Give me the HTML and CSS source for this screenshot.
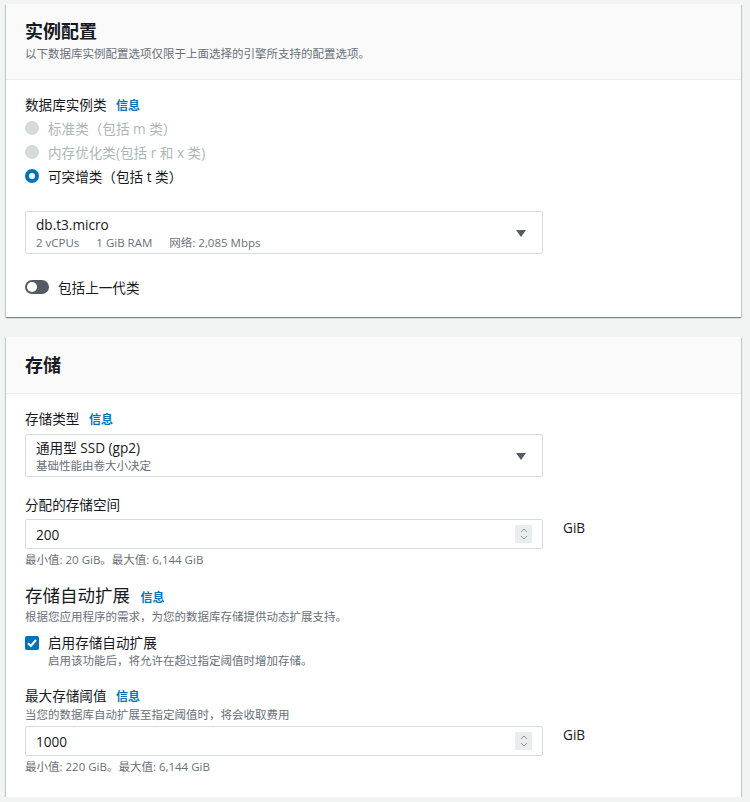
FILE: index.html
```html
<!DOCTYPE html>
<html lang="zh-CN">
<head>
    <meta charset="UTF-8">
    <meta name="viewport" content="width=device-width, initial-scale=1.0">
    <link rel="stylesheet" href="styles.css">
</head>
<body>
    <div class="page">
        <!-- 实例配置 -->
        <section class="card">
            <div class="card-header">
                <h2 class="card-title">实例配置</h2>
                <p class="card-desc">以下数据库实例配置选项仅限于上面选择的引擎所支持的配置选项。</p>
            </div>
            <div class="card-body">
                <div class="field-label">数据库实例类 <a class="info">信息</a></div>
                <div class="radio-group">
                    <div class="radio-row disabled"><span class="radio"></span>标准类（包括 m 类）</div>
                    <div class="radio-row disabled"><span class="radio"></span>内存优化类(包括 r 和 x 类)</div>
                    <div class="radio-row"><span class="radio checked"></span>可突增类（包括 t 类）</div>
                </div>
                <div class="select select-instance">
                    <div class="select-text">
                        <div class="select-main">db.t3.micro</div>
                        <div class="select-sub"><span>2 vCPUs</span><span>1 GiB RAM</span><span>网络: 2,085 Mbps</span></div>
                    </div>
                    <span class="caret"></span>
                </div>
                <div class="toggle-row">
                    <span class="toggle"><span class="knob"></span></span>
                    包括上一代类
                </div>
            </div>
        </section>

        <!-- 存储 -->
        <section class="card">
            <div class="card-header storage-header">
                <h2 class="card-title">存储</h2>
            </div>
            <div class="card-body storage-body">
                <div class="field-label">存储类型 <a class="info">信息</a></div>
                <div class="select select-storage">
                    <div class="select-text">
                        <div class="select-main">通用型 SSD (gp2)</div>
                        <div class="select-sub">基础性能由卷大小决定</div>
                    </div>
                    <span class="caret"></span>
                </div>

                <div class="field-label gap-top">分配的存储空间</div>
                <div class="input-row">
                    <div class="input">
                        <span>200</span>
                        <span class="spinner">
                            <svg width="10" height="14" viewBox="0 0 10 14"><path d="M2 5 L5 2 L8 5 M2 9 L5 12 L8 9" fill="none" stroke="#879596" stroke-width="1"/></svg>
                        </span>
                    </div>
                    <span class="unit">GiB</span>
                </div>
                <div class="hint">最小值: 20 GiB。最大值: 6,144 GiB</div>

                <div class="sub-heading">存储自动扩展 <a class="info">信息</a></div>
                <div class="desc">根据您应用程序的需求，为您的数据库存储提供动态扩展支持。</div>
                <div class="check-row">
                    <span class="checkbox">
                        <svg width="14" height="14" viewBox="0 0 14 14"><path d="M3 7.2 L5.8 10 L11 4" fill="none" stroke="#fff" stroke-width="2"/></svg>
                    </span>
                    <div>
                        <div class="check-label">启用存储自动扩展</div>
                        <div class="desc">启用该功能后，将允许在超过指定阈值时增加存储。</div>
                    </div>
                </div>

                <div class="field-label threshold-label">最大存储阈值 <a class="info">信息</a></div>
                <div class="desc">当您的数据库自动扩展至指定阈值时，将会收取费用</div>
                <div class="input-row">
                    <div class="input">
                        <span>1000</span>
                        <span class="spinner">
                            <svg width="10" height="14" viewBox="0 0 10 14"><path d="M2 5 L5 2 L8 5 M2 9 L5 12 L8 9" fill="none" stroke="#879596" stroke-width="1"/></svg>
                        </span>
                    </div>
                    <span class="unit">GiB</span>
                </div>
                <div class="hint">最小值: 220 GiB。最大值: 6,144 GiB</div>
            </div>
        </section>
    </div>
</body>
</html>
```

FILE: styles.css
```css
/* page */
body {
    margin: 0;
    background-color: #f2f3f3;
    font-family: "Open Sans", "Noto Sans CJK SC", sans-serif;
    color: #16191f;
    font-size: 13.6px;
}

.page {
    padding: 4px 9px 0 6px;
    display: flex;
    flex-direction: column;
    gap: 20px;
}

/* cards */
.card {
    background: #fff;
    box-shadow: 0 1px 1px 0 rgba(0, 28, 36, 0.3), 1px 1px 1px 0 rgba(0, 28, 36, 0.15), -1px 1px 1px 0 rgba(0, 28, 36, 0.15);
}

.card-header {
    background: #fafafa;
    border-bottom: 1px solid #eaeded;
    padding: 16px 19px 17px;
}

.storage-header {
    padding-top: 17px;
}

.card-title {
    margin: 0;
    font-size: 18px;
    line-height: 22px;
    font-weight: bold;
}

.card-desc {
    margin: 4px 0 0;
    font-size: 11.5px;
    line-height: 16px;
    color: #687078;
}

.card-body {
    padding: 14px 19px 20px;
}

.storage-body {
    padding-bottom: 22px;
}

.field-label {
    line-height: 22px;
}

.info {
    color: #0073bb;
    font-size: 12px;
    font-weight: bold;
    margin-left: 6px;
}

.gap-top {
    margin-top: 17px;
}

.threshold-label {
    margin-top: 17px;
    line-height: 20px;
}

/* radios */
.radio-group {
    margin-top: -1px;
}

.radio-row {
    display: flex;
    align-items: center;
    height: 24px;
}

.radio-row.disabled {
    color: #aab7b8;
}

.radio {
    width: 14px;
    height: 14px;
    border-radius: 50%;
    background: #d5dbdb;
    margin-right: 9px;
    box-sizing: border-box;
}

.radio.checked {
    background: #fff;
    border: 4px solid #0073bb;
}

/* selects */
.select {
    width: 518px;
    box-sizing: border-box;
    border: 1px solid #d5dbdb;
    border-radius: 2px;
    display: flex;
    align-items: center;
    padding: 3px 16px 2px 10px;
}

.select-instance {
    margin-top: 23px;
}

.select-storage {
    margin-top: 3px;
}

.select-text {
    flex: 1;
}

.select-main {
    line-height: 20px;
}

.select-sub {
    font-size: 11.5px;
    line-height: 16px;
    color: #687078;
}

.select-sub span {
    margin-right: 17px;
}

.caret {
    width: 0;
    height: 0;
    border-left: 5px solid transparent;
    border-right: 5px solid transparent;
    border-top: 7px solid #545b64;
}

/* toggle */
.toggle-row {
    display: flex;
    align-items: center;
    height: 20px;
    margin-top: 23px;
}

.toggle {
    width: 24px;
    height: 14px;
    border-radius: 7px;
    background: #545b64;
    margin-right: 9px;
    display: flex;
    align-items: center;
    padding-left: 2px;
    box-sizing: border-box;
}

.knob {
    width: 10px;
    height: 10px;
    border-radius: 50%;
    background: #fff;
}

/* number inputs */
.input-row {
    display: flex;
    align-items: flex-start;
    margin-top: 3px;
}

.input {
    width: 518px;
    height: 30px;
    box-sizing: border-box;
    border: 1px solid #d5dbdb;
    border-radius: 2px;
    display: flex;
    align-items: center;
    justify-content: space-between;
    padding: 0 10px 0 10px;
}

.spinner {
    width: 17px;
    height: 18px;
    background: #eaeded;
    display: flex;
    align-items: center;
    justify-content: center;
}

.unit {
    margin-left: 20px;
    line-height: 20px;
    margin-top: -1px;
}

.hint {
    font-size: 11.5px;
    line-height: 16px;
    color: #687078;
    margin-top: 3px;
}

.desc {
    font-size: 11.5px;
    line-height: 16px;
    color: #687078;
}

.sub-heading {
    font-size: 17.5px;
    line-height: 22px;
    margin-top: 16px;
}

/* checkbox */
.check-row {
    display: flex;
    align-items: flex-start;
    margin-top: 8px;
}

.checkbox {
    width: 14px;
    height: 14px;
    border-radius: 2px;
    background: #0073bb;
    margin: 3px 9px 0 0;
    flex-shrink: 0;
    display: flex;
}

.check-label {
    line-height: 20px;
}
```
